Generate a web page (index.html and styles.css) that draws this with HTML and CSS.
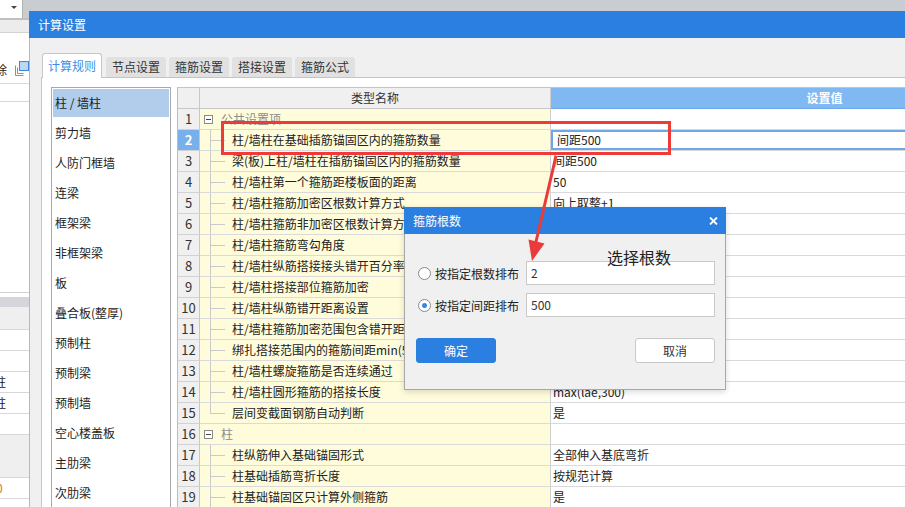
FILE: index.html
```html
<!DOCTYPE html>
<html lang="zh-CN">
<head>
<meta charset="utf-8">
<title>计算设置</title>
<link rel="stylesheet" href="styles.css">
</head>
<body>
<div class="screen">
  <aside class="host">
    <div class="host-top"><div class="host-dd"><span class="dd-arrow"></span></div></div>
    <div class="host-strip"></div>
    <div class="host-tool">
      <span class="cut">除</span>
      <svg class="copy-ico" width="15" height="17" viewBox="0 0 15 17">
        <path d="M1.5 5.5v10h8" fill="none" stroke="#e07a28" stroke-width="1"/>
        <path d="M3.5 7.5v6h6" fill="none" stroke="#e07a28" stroke-width="1"/>
        <rect x="5.5" y="1.5" width="9" height="9" fill="#bcd7f4" stroke="#3d86d8" stroke-width="1"/>
      </svg>
    </div>
    <div class="host-sep"></div>
    <div class="host-blank"></div>
    <div class="host-pad"></div>
    <div class="host-head"></div>
    <div class="host-sub"></div>
    <div class="host-cell"></div>
    <div class="host-cell"></div>
    <div class="host-cell"><span class="clip">柱</span></div>
    <div class="host-cell"><span class="clip">柱</span></div>
    <div class="host-cell"></div>
    <div class="host-group"></div>
    <div class="host-cell"><span class="clip orange">0</span></div>
    <div class="host-cell"></div>
  </aside>

  <main class="win">
    <div class="win-title">计算设置</div>
    <div class="win-body">
      <nav class="tabs">
        <span class="tab active">计算规则</span>
        <span class="tab">节点设置</span>
        <span class="tab">箍筋设置</span>
        <span class="tab">搭接设置</span>
        <span class="tab">箍筋公式</span>
      </nav>
      <section class="panel">
        <ul class="cats">
          <li class="on">柱 / 墙柱</li>
          <li>剪力墙</li>
          <li>人防门框墙</li>
          <li>连梁</li>
          <li>框架梁</li>
          <li>非框架梁</li>
          <li>板</li>
          <li>叠合板(整厚)</li>
          <li>预制柱</li>
          <li>预制梁</li>
          <li>预制墙</li>
          <li>空心楼盖板</li>
          <li>主肋梁</li>
          <li>次肋梁</li>
        </ul>
        <div class="sheet">
          <div class="grid">
            <div class="c num hdr"></div><div class="c name hdr">类型名称</div><div class="c val hdr">设置值</div>

            <div class="c num">1</div><div class="c name grp"><span class="fold"></span>公共设置项</div><div class="c val"></div>
            <div class="c num cur">2</div><div class="c name leaf">柱/墙柱在基础插筋锚固区内的箍筋数量</div><div class="c val editing">间距500</div>
            <div class="c num">3</div><div class="c name leaf">梁(板)上柱/墙柱在插筋锚固区内的箍筋数量</div><div class="c val">间距500</div>
            <div class="c num">4</div><div class="c name leaf">柱/墙柱第一个箍筋距楼板面的距离</div><div class="c val">50</div>
            <div class="c num">5</div><div class="c name leaf">柱/墙柱箍筋加密区根数计算方式</div><div class="c val">向上取整+1</div>
            <div class="c num">6</div><div class="c name leaf">柱/墙柱箍筋非加密区根数计算方式</div><div class="c val">向上取整-1</div>
            <div class="c num">7</div><div class="c name leaf">柱/墙柱箍筋弯勾角度</div><div class="c val">135°</div>
            <div class="c num">8</div><div class="c name leaf">柱/墙柱纵筋搭接接头错开百分率</div><div class="c val">50%</div>
            <div class="c num">9</div><div class="c name leaf">柱/墙柱搭接部位箍筋加密</div><div class="c val">是</div>
            <div class="c num">10</div><div class="c name leaf">柱/墙柱纵筋错开距离设置</div><div class="c val">max(35d,500)</div>
            <div class="c num">11</div><div class="c name leaf">柱/墙柱箍筋加密范围包含错开距离</div><div class="c val">否</div>
            <div class="c num">12</div><div class="c name leaf">绑扎搭接范围内的箍筋间距min(5d,100)</div><div class="c val">是</div>
            <div class="c num">13</div><div class="c name leaf">柱/墙柱螺旋箍筋是否连续通过</div><div class="c val">是</div>
            <div class="c num">14</div><div class="c name leaf">柱/墙柱圆形箍筋的搭接长度</div><div class="c val">max(lae,300)</div>
            <div class="c num">15</div><div class="c name leaf last">层间变截面钢筋自动判断</div><div class="c val">是</div>
            <div class="c num">16</div><div class="c name grp"><span class="fold"></span>柱</div><div class="c val"></div>
            <div class="c num">17</div><div class="c name leaf">柱纵筋伸入基础锚固形式</div><div class="c val">全部伸入基底弯折</div>
            <div class="c num">18</div><div class="c name leaf">柱基础插筋弯折长度</div><div class="c val">按规范计算</div>
            <div class="c num">19</div><div class="c name leaf">柱基础锚固区只计算外侧箍筋</div><div class="c val">是</div>
          </div>
        </div>
      </section>
    </div>
  </main>
</div>

<div class="mark-box"></div>

<div class="dlg">
  <div class="dlg-title">
    <span>箍筋根数</span>
    <svg class="dlg-x" width="9" height="8" viewBox="0 0 9 8"><path d="M1 0.5L8 7.5M8 0.5L1 7.5" stroke="#fff" stroke-width="1.8" fill="none"/></svg>
  </div>
  <div class="dlg-body">
    <div class="opt"><span class="radio"></span><span class="opt-label">按指定根数排布</span><span class="field">2</span></div>
    <div class="opt"><span class="radio on"></span><span class="opt-label">按指定间距排布</span><span class="field">500</span></div>
    <div class="btns"><span class="btn primary">确定</span><span class="btn">取消</span></div>
  </div>
  <div class="note">选择根数</div>
</div>

<svg class="mark-arrow" width="905" height="507" viewBox="0 0 905 507">
  <line x1="556" y1="156" x2="535" y2="246" stroke="#ea3b3b" stroke-width="3"/>
  <polygon points="528.5,239.5 544.5,243.5 532,261" fill="#ea3b3b"/>
</svg>
</body>
</html>
```

FILE: styles.css
```css
* { box-sizing: border-box; }
html, body { margin: 0; padding: 0; }
body {
  width: 905px;
  height: 507px;
  overflow: hidden;
  position: relative;
  font-family: "Microsoft YaHei", "Noto Sans CJK SC", "Noto Sans", sans-serif;
  font-size: 12px;
  color: #333;
  background: #c9ccd1;
}
.screen { display: flex; height: 507px; }

/* host application behind the dialog */
.host {
  width: 29px;
  flex: none;
  background: #fff;
  display: flex;
  flex-direction: column;
  overflow: hidden;
}
.host > div { flex: none; }
.host-top { height: 18px; display: flex; background: #c9ccd1; }
.host-dd {
  width: 23px;
  background: #fff;
  border-right: 1px solid #b4b4b4;
  display: flex;
  justify-content: flex-end;
  align-items: flex-start;
  padding: 6px 5px 0 0;
}
.dd-arrow {
  width: 0; height: 0;
  border-left: 3px solid transparent;
  border-right: 3px solid transparent;
  border-top: 3px solid #444;
}
.host-strip { height: 15px; background: #ececec; border-top: 2px solid #c0c0c0; border-bottom: 1px solid #d3d3d3; }
.host-tool {
  height: 51px;
  display: flex;
  align-items: flex-start;
  padding-top: 27px;
  border-bottom: 1px solid #dadada;
}
.cut { margin-left: -5px; margin-top: 3px; line-height: 14px; flex: none; color: #222; }
.copy-ico { margin-left: 7px; flex: none; display: block; }
.host-sep { height: 18px; border-bottom: 1px solid #d6d6d6; }
.host-blank { height: 191px; border-bottom: 1px solid #d0d0d0; }
.host-pad { height: 4px; }
.host-head { height: 10px; background: #d5d6db; }
.host-sub { height: 23px; background: #efefef; border-bottom: 1px solid #d8d8d8; }
.host-cell { height: 21px; border-bottom: 1px solid #d8d8d8; line-height: 20px; white-space: nowrap; }
.host-group { height: 43px; background: #efefef; border-bottom: 1px solid #d8d8d8; }
.clip { display: inline-block; margin-left: -6px; color: #222; }
.clip.orange { color: #d07a10; margin-left: -4px; }

/* main settings window */
.win {
  flex: 1;
  min-width: 0;
  margin-top: 11px;
  display: flex;
  flex-direction: column;
  background: #f0f0f0;
}
.win-title {
  height: 27px;
  flex: none;
  background: #2b7fe0;
  color: #fff;
  line-height: 27px;
  padding-left: 9px;
}
.win-body {
  flex: 1;
  min-height: 0;
  border-left: 1px solid #b8b8b8;
  padding: 15px 0 0 11px;
  display: flex;
  flex-direction: column;
}
.tabs {
  display: flex;
  align-items: flex-end;
  height: 24px;
  flex: none;
  padding-left: 1px;
  gap: 3px;
  position: relative;
  z-index: 1;
}
.tab {
  height: 20px;
  line-height: 20px;
  padding: 0 6px;
  background: #e1e1e1;
  border-radius: 3px 3px 0 0;
  white-space: nowrap;
  color: #333;
}
.tab.active {
  height: 25px;
  margin-bottom: -1px;
  margin-right: 1px;
  background: #fff;
  border: 1px solid #c6c6c6;
  border-bottom: none;
  padding: 1px 5px 0;
  line-height: 22px;
  color: #3d8ee8;
}
.panel {
  flex: 1;
  min-height: 0;
  background: #fff;
  border-top: 1px solid #c4c4c4;
  border-left: 1px solid #c8c8c8;
  padding: 9px 0 0 9px;
  display: flex;
  align-items: flex-start;
  overflow: hidden;
}
.cats {
  list-style: none;
  margin: 0 6px 0 0;
  padding: 1px;
  width: 120px;
  height: 440px;
  flex: none;
  border: 1px solid #a9a9a9;
}
.cats li {
  height: 28px;
  line-height: 28px;
  margin-bottom: 2px;
  padding-left: 2px;
  white-space: nowrap;
  color: #222;
}
.cats li.on { background: #b1cdeb; }

.sheet {
  flex: 1;
  min-width: 0;
  height: 430px;
  overflow: hidden;
  border-left: 1px solid #bdbdbd;
  border-top: 1px solid #c4c4c4;
}
.grid {
  display: grid;
  grid-template-columns: 22px 351px 547px;
  grid-auto-rows: 21px;
  width: 920px;
}
.c {
  position: relative;
  border-right: 1px solid #cfcfcf;
  border-bottom: 1px solid #dadada;
  white-space: nowrap;
  overflow: hidden;
  line-height: 20px;
  color: #222;
}
.c.num {
  background: #f0f0f0;
  text-align: center;
  font-size: 13px;
  color: #333;
  border-right-color: #c8c8c8;
  border-bottom-color: #d2d2d2;
}
.c.num.cur { background: #79afea; color: #fff; font-weight: bold; }
.c.name { background: #fffcdc; }
.c.val { background: #fff; padding-left: 2px; }
.c.hdr { background: #f0f0f0; text-align: center; color: #333; border-bottom-color: #c8c8c8; }
.c.val.hdr {
  background: #80b9f2;
  color: #fff;
  font-weight: bold;
  padding: 0;
  border-bottom-color: #6aa6e8;
  border-right: none;
}
.c.val.editing { box-shadow: inset 0 0 0 2px #6fa6e4; padding-left: 6px; }

.c.name.grp {
  display: flex;
  align-items: center;
  gap: 8px;
  padding-left: 4px;
  color: #8c8c8c;
}
.fold {
  width: 9px;
  height: 9px;
  border: 1px solid #8a8a8a;
  background: #fff;
  position: relative;
  flex: none;
}
.fold::after {
  content: "";
  position: absolute;
  left: 1px; right: 1px; top: 3px;
  height: 1px;
  background: #444;
}
.c.name.leaf { padding-left: 32px; }
.c.name.leaf::before {
  content: "";
  position: absolute;
  left: 10px; top: 0; bottom: 0;
  width: 1px;
  background: #cacaca;
}
.c.name.leaf.last::before { bottom: auto; height: 10px; }
.c.name.leaf::after {
  content: "";
  position: absolute;
  left: 10px; top: 10px;
  width: 15px;
  height: 1px;
  background: #cacaca;
}

/* annotation overlays */
.mark-box {
  position: absolute;
  left: 221px;
  top: 121px;
  width: 450px;
  height: 34px;
  border: 3px solid #ef3a3a;
  z-index: 3;
}
.mark-arrow {
  position: absolute;
  left: 0;
  top: 0;
  z-index: 6;
  pointer-events: none;
}

/* floating dialog */
.dlg {
  position: absolute;
  left: 404px;
  top: 207px;
  width: 322px;
  height: 183px;
  background: #f0f0f0;
  border: 1px solid #a7a7a7;
  border-top: none;
  box-shadow: 0 2px 6px rgba(0, 0, 0, 0.15);
  z-index: 4;
}
.dlg-title {
  height: 27px;
  margin: 0 -1px;
  background: #2b7fe0;
  color: #fff;
  display: flex;
  align-items: center;
  justify-content: space-between;
  padding: 0 8px 0 9px;
}
.dlg-x { display: block; flex: none; }
.dlg-body { padding: 27px 10px 0 11px; }
.opt { display: flex; align-items: center; height: 24px; }
.opt + .opt { margin-top: 8px; }
.radio {
  width: 13px;
  height: 13px;
  margin-left: 2px;
  border-radius: 50%;
  border: 1px solid #8a8a8a;
  background: #fff;
  flex: none;
  position: relative;
}
.radio.on::after {
  content: "";
  position: absolute;
  left: 3px; top: 3px;
  width: 5px; height: 5px;
  border-radius: 50%;
  background: #3b85e0;
}
.opt-label { margin-left: 4px; margin-right: 7px; white-space: nowrap; color: #222; }
.field {
  flex: 1;
  height: 24px;
  border: 1px solid #c9c9c9;
  background: #fff;
  padding-left: 4px;
  line-height: 22px;
  color: #333;
}
.btns { display: flex; justify-content: space-between; margin-top: 21px; }
.btn {
  width: 80px;
  height: 25px;
  line-height: 23px;
  text-align: center;
  border: 1px solid #c8c8c8;
  border-radius: 3px;
  background: #fff;
  color: #333;
}
.btn.primary { background: #2b7fe0; border-color: #2b7fe0; color: #fff; }
.note {
  position: absolute;
  left: 202px;
  top: 40px;
  font-size: 16px;
  line-height: 20px;
  color: #222;
}
```
